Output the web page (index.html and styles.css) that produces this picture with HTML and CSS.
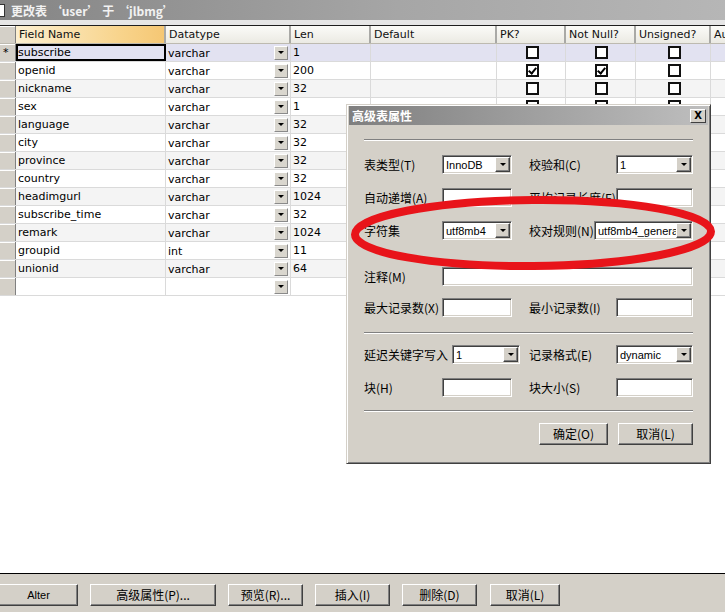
FILE: index.html
```html
<!DOCTYPE html>
<html lang="zh-CN">

<head>
    <meta charset="UTF-8">
    <meta name="viewport" content="width=device-width, initial-scale=1.0">
    <title>更改表</title>
    <link rel="stylesheet" href="styles.css">
</head>

<body>
    <!-- Title bar -->
    <div class="titlebar"><span class="title-icon"></span>更改表 ‘user’ 于 ‘jlbmg’</div>
    <div class="strip"></div>

    <!-- Column grid -->
    <div class="grid">
        <div class="row head">
            <div class="cell c-ind"></div>
            <div class="cell c-name sorted">Field Name</div>
            <div class="cell c-type">Datatype</div>
            <div class="cell c-len">Len</div>
            <div class="cell c-def">Default</div>
            <div class="cell c-pk">PK?</div>
            <div class="cell c-nn">Not Null?</div>
            <div class="cell c-uns">Unsigned?</div>
            <div class="cell c-au">Auto Incr?</div>
        </div>
        <div class="row current">
            <div class="cell c-ind">*</div>
            <div class="cell c-name focus">subscribe</div>
            <div class="cell c-type"><span class="txt">varchar</span><span class="dd"></span></div>
            <div class="cell c-len">1</div>
            <div class="cell c-def"></div>
            <div class="cell c-pk chk"><span class="box"></span></div>
            <div class="cell c-nn chk"><span class="box"></span></div>
            <div class="cell c-uns chk"><span class="box"></span></div>
            <div class="cell c-au"></div>
        </div>
        <div class="row">
            <div class="cell c-ind"></div>
            <div class="cell c-name">openid</div>
            <div class="cell c-type"><span class="txt">varchar</span><span class="dd"></span></div>
            <div class="cell c-len">200</div>
            <div class="cell c-def"></div>
            <div class="cell c-pk chk"><span class="box on"></span></div>
            <div class="cell c-nn chk"><span class="box on"></span></div>
            <div class="cell c-uns chk"><span class="box"></span></div>
            <div class="cell c-au"></div>
        </div>
        <div class="row alt">
            <div class="cell c-ind"></div>
            <div class="cell c-name">nickname</div>
            <div class="cell c-type"><span class="txt">varchar</span><span class="dd"></span></div>
            <div class="cell c-len">32</div>
            <div class="cell c-def"></div>
            <div class="cell c-pk chk"><span class="box"></span></div>
            <div class="cell c-nn chk"><span class="box"></span></div>
            <div class="cell c-uns chk"><span class="box"></span></div>
            <div class="cell c-au"></div>
        </div>
        <div class="row">
            <div class="cell c-ind"></div>
            <div class="cell c-name">sex</div>
            <div class="cell c-type"><span class="txt">varchar</span><span class="dd"></span></div>
            <div class="cell c-len">1</div>
            <div class="cell c-def"></div>
            <div class="cell c-pk chk"><span class="box"></span></div>
            <div class="cell c-nn chk"><span class="box"></span></div>
            <div class="cell c-uns chk"><span class="box"></span></div>
            <div class="cell c-au"></div>
        </div>
        <div class="row alt">
            <div class="cell c-ind"></div>
            <div class="cell c-name">language</div>
            <div class="cell c-type"><span class="txt">varchar</span><span class="dd"></span></div>
            <div class="cell c-len">32</div>
            <div class="cell c-def"></div>
            <div class="cell c-pk"></div>
            <div class="cell c-nn"></div>
            <div class="cell c-uns"></div>
            <div class="cell c-au"></div>
        </div>
        <div class="row">
            <div class="cell c-ind"></div>
            <div class="cell c-name">city</div>
            <div class="cell c-type"><span class="txt">varchar</span><span class="dd"></span></div>
            <div class="cell c-len">32</div>
            <div class="cell c-def"></div>
            <div class="cell c-pk"></div>
            <div class="cell c-nn"></div>
            <div class="cell c-uns"></div>
            <div class="cell c-au"></div>
        </div>
        <div class="row alt">
            <div class="cell c-ind"></div>
            <div class="cell c-name">province</div>
            <div class="cell c-type"><span class="txt">varchar</span><span class="dd"></span></div>
            <div class="cell c-len">32</div>
            <div class="cell c-def"></div>
            <div class="cell c-pk"></div>
            <div class="cell c-nn"></div>
            <div class="cell c-uns"></div>
            <div class="cell c-au"></div>
        </div>
        <div class="row">
            <div class="cell c-ind"></div>
            <div class="cell c-name">country</div>
            <div class="cell c-type"><span class="txt">varchar</span><span class="dd"></span></div>
            <div class="cell c-len">32</div>
            <div class="cell c-def"></div>
            <div class="cell c-pk"></div>
            <div class="cell c-nn"></div>
            <div class="cell c-uns"></div>
            <div class="cell c-au"></div>
        </div>
        <div class="row alt">
            <div class="cell c-ind"></div>
            <div class="cell c-name">headimgurl</div>
            <div class="cell c-type"><span class="txt">varchar</span><span class="dd"></span></div>
            <div class="cell c-len">1024</div>
            <div class="cell c-def"></div>
            <div class="cell c-pk"></div>
            <div class="cell c-nn"></div>
            <div class="cell c-uns"></div>
            <div class="cell c-au"></div>
        </div>
        <div class="row">
            <div class="cell c-ind"></div>
            <div class="cell c-name">subscribe_time</div>
            <div class="cell c-type"><span class="txt">varchar</span><span class="dd"></span></div>
            <div class="cell c-len">32</div>
            <div class="cell c-def"></div>
            <div class="cell c-pk"></div>
            <div class="cell c-nn"></div>
            <div class="cell c-uns"></div>
            <div class="cell c-au"></div>
        </div>
        <div class="row alt">
            <div class="cell c-ind"></div>
            <div class="cell c-name">remark</div>
            <div class="cell c-type"><span class="txt">varchar</span><span class="dd"></span></div>
            <div class="cell c-len">1024</div>
            <div class="cell c-def"></div>
            <div class="cell c-pk"></div>
            <div class="cell c-nn"></div>
            <div class="cell c-uns"></div>
            <div class="cell c-au"></div>
        </div>
        <div class="row">
            <div class="cell c-ind"></div>
            <div class="cell c-name">groupid</div>
            <div class="cell c-type"><span class="txt">int</span><span class="dd"></span></div>
            <div class="cell c-len">11</div>
            <div class="cell c-def"></div>
            <div class="cell c-pk"></div>
            <div class="cell c-nn"></div>
            <div class="cell c-uns"></div>
            <div class="cell c-au"></div>
        </div>
        <div class="row alt">
            <div class="cell c-ind"></div>
            <div class="cell c-name">unionid</div>
            <div class="cell c-type"><span class="txt">varchar</span><span class="dd"></span></div>
            <div class="cell c-len">64</div>
            <div class="cell c-def"></div>
            <div class="cell c-pk"></div>
            <div class="cell c-nn"></div>
            <div class="cell c-uns"></div>
            <div class="cell c-au"></div>
        </div>
        <div class="row">
            <div class="cell c-ind"></div>
            <div class="cell c-name"></div>
            <div class="cell c-type"><span class="txt"></span><span class="dd"></span></div>
            <div class="cell c-len"></div>
            <div class="cell c-def"></div>
            <div class="cell c-pk"></div>
            <div class="cell c-nn"></div>
            <div class="cell c-uns"></div>
            <div class="cell c-au"></div>
        </div>
    </div>

    <div class="blank"></div>

    <!-- Bottom buttons -->
    <div class="footer">
        <button class="btn b-alter">Alter</button>
        <button class="btn b-adv">高级属性(P)...</button>
        <button class="btn b-mid">预览(R)...</button>
        <button class="btn b-mid">插入(I)</button>
        <button class="btn b-mid">删除(D)</button>
        <button class="btn b-cancel">取消(L)</button>
    </div>

    <!-- Advanced properties dialog -->
    <div class="dialog">
        <div class="dlg-title">
            <span>高级表属性</span>
            <span class="dlg-close">X</span>
        </div>
        <div class="dlg-body">
            <div class="sep s1"></div>

            <div class="frow r1">
                <span class="lbl l1">表类型(T)</span>
                <span class="fld sel w70"><span class="val">InnoDB</span><span class="dd"></span></span>
                <span class="lbl l2">校验和(C)</span>
                <span class="fld sel w77"><span class="val">1</span><span class="dd"></span></span>
            </div>
            <div class="frow r2">
                <span class="lbl l1">自动递增(A)</span>
                <span class="fld w70"></span>
                <span class="lbl l2">平均记录长度(F)</span>
                <span class="fld w77"></span>
            </div>
            <div class="frow r3">
                <span class="lbl l1">字符集</span>
                <span class="fld sel w70"><span class="val">utf8mb4</span><span class="dd"></span></span>
                <span class="lbl l2 short">校对规则(N)</span>
                <span class="fld sel w99"><span class="val">utf8mb4_general_ci</span><span class="dd"></span></span>
            </div>
            <div class="frow r4">
                <span class="lbl l1">注释(M)</span>
                <span class="fld wide"></span>
            </div>
            <div class="frow r5">
                <span class="lbl l1">最大记录数(X)</span>
                <span class="fld w70"></span>
                <span class="lbl l2">最小记录数(I)</span>
                <span class="fld w77"></span>
            </div>

            <div class="sep s2"></div>

            <div class="frow r6">
                <span class="lbl l1 long">延迟关键字写入</span>
                <span class="fld sel w68"><span class="val">1</span><span class="dd"></span></span>
                <span class="lbl l2 near">记录格式(E)</span>
                <span class="fld sel w77"><span class="val">dynamic</span><span class="dd"></span></span>
            </div>
            <div class="frow r7">
                <span class="lbl l1">块(H)</span>
                <span class="fld w70"></span>
                <span class="lbl l2">块大小(S)</span>
                <span class="fld w77"></span>
            </div>

            <div class="sep s3"></div>

            <div class="dlg-buttons">
                <button class="btn b-ok">确定(O)</button>
                <button class="btn b-no">取消(L)</button>
            </div>
        </div>
    </div>

    <!-- Red hand-drawn mark -->
    <svg class="mark" width="725" height="612" viewBox="0 0 725 612">
        <ellipse cx="533" cy="233" rx="178" ry="33" fill="none" stroke="#e8141a" stroke-width="8" transform="rotate(-0.5 533 233)"/>
    </svg>
</body>

</html>
```

FILE: styles.css
```css
* {
    box-sizing: border-box;
}

body {
    margin: 0;
    width: 725px;
    height: 612px;
    overflow: hidden;
    position: relative;
    display: flex;
    flex-direction: column;
    background: #fff;
    color: #000;
    font-family: "DejaVu Sans", sans-serif;
    font-size: 11px;
}
/* Window title */

.titlebar {
    height: 20px;
    display: flex;
    align-items: center;
    background: linear-gradient(to right, #858585, #a6a6a6 55%, #b6b6b6);
    color: #f2f2f2;
    font-family: "Noto Sans CJK SC", sans-serif;
    font-size: 12px;
    font-weight: bold;
    white-space: pre;
}

.title-icon {
    width: 5px;
    height: 13px;
    margin-right: 6px;
    background: #fff;
    border: 1px solid #333;
    border-left: none;
}

.strip {
    height: 6px;
    background: #e6e6e6;
    border-bottom: 1px solid #1e1e1e;
}
/* Grid */

.row {
    display: flex;
    height: 18px;
    border-bottom: 1px solid #dadada;
    background: #fff;
}

.row.alt {
    background: #f4f4f4;
}

.row.current {
    background: #e2e2f1;
}

.cell {
    flex: none;
    height: 17px;
    line-height: 17px;
    padding-left: 2px;
    border-right: 1px solid #dadada;
    white-space: nowrap;
    overflow: hidden;
}

.c-ind {
    width: 16px;
    padding-left: 3px;
    background: #d4d0c8;
    border-right: 1px solid #808080;
    box-shadow: inset 0 1px #fff;
}

.c-name {
    width: 150px;
}

.c-type {
    width: 125px;
    display: flex;
    align-items: center;
}

.c-type .txt {
    flex: 1;
    padding-top: 2px;
}

.c-len {
    width: 80px;
}

.c-def {
    width: 126px;
}

.c-pk {
    width: 69px;
}

.c-nn {
    width: 70px;
}

.c-uns {
    width: 75px;
}

.c-au {
    flex: 1;
    border-right: none;
}

.focus {
    outline: 2px solid #000;
    outline-offset: -2px;
}

.row.head {
    background: linear-gradient(#fbfbf8, #ebeae3);
    border-bottom: 1px solid #bdbab0;
}

.row.head .cell {
    padding-left: 3px;
    border-right: 2px solid #a9a9a6;
    color: #111;
}

.row.head .c-ind {
    background: #d4d0c8;
    border-right: 1px solid #808080;
}

.row.head .sorted {
    background: linear-gradient(to right, #fcefd0, #f8d48c 70%, #f5c774);
}

.row.head .c-au {
    border-right: none;
}

.dd {
    flex: none;
    width: 14px;
    height: 14px;
    margin-right: 2px;
    background: #d9d6ce;
    border: 1px solid;
    border-color: #fff #8a8a8a #8a8a8a #fff;
    display: flex;
    align-items: center;
    justify-content: center;
}

.dd::after {
    content: "";
    border-left: 3px solid transparent;
    border-right: 3px solid transparent;
    border-top: 3px solid #000;
}

.chk {
    display: flex;
    align-items: center;
    justify-content: center;
}

.box {
    width: 13px;
    height: 13px;
    border: 2px solid #111;
    background: #fff;
    display: flex;
    align-items: center;
    justify-content: center;
}

.box.on::after {
    content: "";
    width: 3px;
    height: 6px;
    margin-top: -2px;
    border-right: 2px solid #000;
    border-bottom: 2px solid #000;
    transform: rotate(40deg);
}

.blank {
    flex: 1;
    background: #fff;
}
/* Bottom bar */

.footer {
    height: 39px;
    flex: none;
    display: flex;
    align-items: flex-start;
    gap: 12px;
    padding-top: 10px;
    background: #d4d0c8;
    border-top: 1px solid #000;
}

.btn {
    height: 22px;
    padding: 0;
    background: #d4d0c8;
    border: 1px solid;
    border-color: #fff #404040 #404040 #fff;
    box-shadow: inset -1px -1px #808080;
    font-family: "Noto Sans CJK SC", sans-serif;
    font-size: 12px;
    color: #000;
    line-height: 18px;
}

.b-alter {
    width: 79px;
    margin-left: -1px;
    font-family: "Liberation Sans", sans-serif;
    font-size: 11px;
}

.b-adv {
    width: 126px;
}

.b-mid {
    width: 75px;
}

.b-cancel {
    width: 70px;
    margin-left: 1px;
}
/* Dialog */

.dialog {
    position: absolute;
    left: 346px;
    top: 104px;
    width: 365px;
    height: 360px;
    padding: 1px 2px;
    background: #d4d0c8;
    border: 1px solid;
    border-color: #d4d0c8 #404040 #404040 #d4d0c8;
    box-shadow: inset 1px 1px #fff, inset -1px -1px #808080;
    font-family: "Noto Sans CJK SC", sans-serif;
    font-size: 12px;
}

.dlg-title {
    height: 19px;
    display: flex;
    align-items: center;
    justify-content: space-between;
    padding-left: 3px;
    background: linear-gradient(to right, #7f7f7f, #bebebe);
    color: #fff;
    font-weight: bold;
}

.dlg-close {
    width: 16px;
    height: 14px;
    margin-right: 2px;
    background: #d4d0c8;
    border: 1px solid;
    border-color: #fff #404040 #404040 #fff;
    color: #000;
    font-family: "DejaVu Sans", sans-serif;
    font-size: 10px;
    line-height: 12px;
    text-align: center;
}

.dlg-body {
    display: flex;
    flex-direction: column;
    padding: 0 15px;
}

.sep {
    height: 2px;
    border-top: 1px solid #808080;
    border-bottom: 1px solid #fff;
}

.s1 {
    margin-top: 14px;
}

.s2 {
    margin-top: 15px;
}

.s3 {
    margin-top: 13px;
}

.frow {
    display: flex;
    align-items: center;
    height: 19px;
    margin-top: 14px;
}

.r4 {
    margin-top: 27px;
}

.r5 {
    margin-top: 12px;
}

.r6 {
    margin-top: 11px;
}

.lbl {
    flex: none;
    white-space: nowrap;
    overflow: hidden;
}

.l1 {
    width: 78px;
}

.l1.long {
    width: 88px;
}

.l2 {
    width: 87px;
    margin-left: 17px;
}

.l2.short {
    width: 65px;
}

.l2.near {
    margin-left: 9px;
}

.fld {
    flex: none;
    height: 19px;
    background: #fff;
    border: 1px solid;
    border-color: #808080 #fff #fff #808080;
    box-shadow: inset 1px 1px #404040, inset -1px -1px #d4d0c8;
    display: flex;
    align-items: center;
    overflow: hidden;
}

.fld .val {
    flex: 1;
    padding-left: 3px;
    white-space: nowrap;
    overflow: hidden;
    font-family: "Liberation Sans", sans-serif;
    font-size: 11px;
}

.fld .dd {
    width: 15px;
    height: 15px;
    margin-right: 1px;
    border-color: #fff #404040 #404040 #fff;
    box-shadow: inset -1px -1px #808080;
    background: #d4d0c8;
}

.w68 {
    width: 68px;
}

.w70 {
    width: 70px;
}

.w77 {
    width: 77px;
}

.w99 {
    width: 99px;
}

.wide {
    width: 251px;
}

.dlg-buttons {
    display: flex;
    justify-content: flex-end;
    gap: 10px;
    margin-top: 11px;
}

.b-ok {
    width: 69px;
}

.b-no {
    width: 75px;
}
/* Red mark over everything */

.mark {
    position: absolute;
    left: 0;
    top: 0;
    pointer-events: none;
}
```
